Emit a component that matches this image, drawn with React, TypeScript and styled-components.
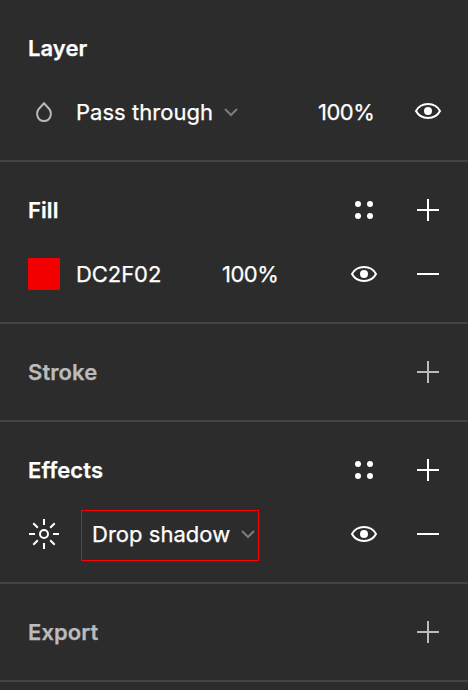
import React from "react";
import styled, { createGlobalStyle } from "styled-components";

const GlobalStyle = createGlobalStyle`
  *, *::before, *::after { box-sizing: border-box; }
  body { margin: 0; background: #2c2c2c; overflow: hidden; }
`;

const Panel = styled.main`
  width: 468px;
  height: 690px;
  overflow: hidden;
  background: #2c2c2c;
  color: #fff;
  font: 400 22px/32px Inter, "Liberation Sans", sans-serif;
  -webkit-text-stroke: 0.25px currentColor;
`;

const Section = styled.section`
  padding: 16px 8px 16px 28px;
  border-bottom: 2px solid #444;
`;

const Row = styled.div`
  display: flex;
  align-items: center;
  height: 64px;
`;

const Title = styled.h2<{ $muted?: boolean }>`
  margin: 0 auto 0 0;
  font-size: 22px;
  font-weight: 600;
  letter-spacing: 0.08px;
  color: ${(p) => (p.$muted ? "#bbb" : "#fff")};
`;

const IconButton = styled.button<{ $muted?: boolean }>`
  display: flex;
  align-items: center;
  justify-content: center;
  width: 64px;
  height: 64px;
  padding: 0;
  border: 0;
  background: none;
  color: ${(p) => (p.$muted ? "#bbb" : "#fff")};
`;

const Lead = styled.span`
  display: flex;
  width: 32px;
  height: 32px;
`;

const Swatch = styled(Lead)`
  background: #f20000;
  border-radius: 1px;
`;

const Value = styled.span<{ $width: number }>`
  width: ${(p) => p.$width}px;
  margin-left: 16px;
  letter-spacing: -0.06px;
  white-space: nowrap;
`;

const Opacity = styled.span<{ $end: number }>`
  margin-right: ${(p) => p.$end}px;
  width: 64px;
  letter-spacing: -0.5px;
`;

const Select = styled.div<{ $outlined?: boolean }>`
  display: flex;
  align-items: center;
  justify-content: space-between;
  width: ${(p) => (p.$outlined ? 178 : 162)}px;
  height: 51px;
  margin: ${(p) => (p.$outlined ? "2px auto 0 21px" : "0 auto 0 16px")};
  padding: ${(p) => (p.$outlined ? "0 3px 2px 10px" : "0")};
  border: ${(p) => (p.$outlined ? "1px solid #f00" : "0")};
  letter-spacing: 0.03px;
  white-space: nowrap;
`;

const Icon = styled.svg`
  display: block;
  flex: none;
  fill: none;
  stroke: currentColor;
  stroke-width: 2;
`;

const RaisedIcon = styled(Icon)`
  margin-bottom: 2px;
`;

const Plus = () => (
  <Icon width="32" height="32">
    <path d="M5 16h22M16 5v22" />
  </Icon>
);

const Minus = () => (
  <Icon width="32" height="32">
    <path d="M5 16h22" />
  </Icon>
);

const Dots = () => (
  <Icon width="32" height="32">
    <g fill="currentColor" stroke="none">
      <circle cx="10" cy="10" r="3" />
      <circle cx="22" cy="10" r="3" />
      <circle cx="10" cy="22" r="3" />
      <circle cx="22" cy="22" r="3" />
    </g>
  </Icon>
);

const Eye = ({ raised }: { raised?: boolean }) => {
  const Frame = raised ? RaisedIcon : Icon;
  return (
    <Frame width="32" height="32">
      <path d="M4 16C6.400 11.500 10.700 9 16 9s9.600 2.500 12 7c-2.400 4.500-6.700 7-12 7S6.400 20.500 4 16Z" />
      <circle cx="16" cy="16" r="4" fill="currentColor" stroke="none" />
    </Frame>
  );
};

const Drop = () => (
  <Icon width="32" height="32" color="#b8b8b8">
    <path d="M16 7.300 11.200 12.500C7.200 17 9.300 25 16 25s8.800-8 4.800-12.500Z" />
  </Icon>
);

const Sun = () => (
  <Icon width="32" height="32">
    <circle cx="16" cy="16" r="4" />
    <path d="M16 1v6M16 25v6M1 16h6M25 16h6M5.300 5.300l4.500 4.500M22.200 22.200l4.500 4.500M26.700 5.300l-4.500 4.500M9.800 22.200l-4.500 4.500" />
  </Icon>
);

const Chevron = () => (
  <Icon width="14" height="10" color="#7c7c7c">
    <path d="m1 2 6 6 6-6" />
  </Icon>
);

export default function App() {
  return (
    <>
      <GlobalStyle />
      <Panel>
        <Section>
          <Row><Title>Layer</Title></Row>
          <Row>
            <Lead><Drop /></Lead>
            <Select>Pass through<Chevron /></Select>
            <Opacity $end={14}>100%</Opacity>
            <IconButton aria-label="Toggle layer visibility"><Eye raised /></IconButton>
          </Row>
        </Section>
        <Section>
          <Row>
            <Title>Fill</Title>
            <IconButton aria-label="Fill styles"><Dots /></IconButton>
            <IconButton aria-label="Add fill"><Plus /></IconButton>
          </Row>
          <Row>
            <Swatch />
            <Value $width={146}>DC2F02</Value>
            <Opacity $end={46}>100%</Opacity>
            <IconButton aria-label="Toggle fill visibility"><Eye /></IconButton>
            <IconButton aria-label="Remove fill"><Minus /></IconButton>
          </Row>
        </Section>
        <Section>
          <Row>
            <Title $muted>Stroke</Title>
            <IconButton $muted aria-label="Add stroke"><Plus /></IconButton>
          </Row>
        </Section>
        <Section>
          <Row>
            <Title>Effects</Title>
            <IconButton aria-label="Effect styles"><Dots /></IconButton>
            <IconButton aria-label="Add effect"><Plus /></IconButton>
          </Row>
          <Row>
            <Lead><Sun /></Lead>
            <Select $outlined>Drop shadow<Chevron /></Select>
            <IconButton aria-label="Toggle effect visibility"><Eye /></IconButton>
            <IconButton aria-label="Remove effect"><Minus /></IconButton>
          </Row>
        </Section>
        <Section>
          <Row>
            <Title $muted>Export</Title>
            <IconButton $muted aria-label="Add export"><Plus /></IconButton>
          </Row>
        </Section>
      </Panel>
    </>
  );
}
